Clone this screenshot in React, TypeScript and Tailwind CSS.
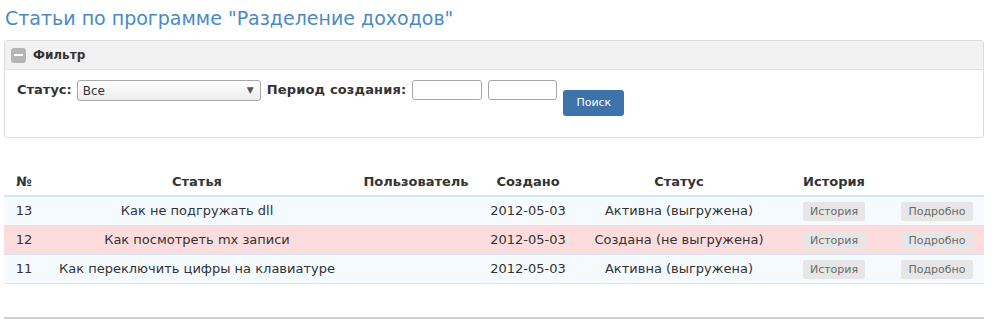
import React from 'react'

const FONT = { fontFamily: '"DejaVu Sans", Verdana, sans-serif' }

interface Article {
  id: number
  title: string
  user: string
  created: string
  status: string
  pending: boolean
}

const ROWS: Article[] = [
  { id: 13, title: 'Как не подгружать dll', user: '', created: '2012-05-03', status: 'Активна (выгружена)', pending: false },
  { id: 12, title: 'Как посмотреть mx записи', user: '', created: '2012-05-03', status: 'Создана (не выгружена)', pending: true },
  { id: 11, title: 'Как переключить цифры на клавиатуре', user: '', created: '2012-05-03', status: 'Активна (выгружена)', pending: false },
]

function SmallButton({ children }: { children: React.ReactNode }) {
  return (
    <span className="inline-block bg-[#e6e6e6] text-[#6a6a6a] text-[11px] leading-[19px] px-[7px] rounded-[2px]">
      {children}
    </span>
  )
}

export default function App() {
  return (
    <div className="w-[994px] h-[333px] bg-white text-[#333] overflow-hidden" style={FONT}>
      <div className="px-[4px]">
        <h1 className="mt-[6px] ml-[1px] text-[19px] leading-[24px] text-[#4a8ac6] font-normal">
          Статьи по программе "Разделение доходов"
        </h1>

        <div className="mt-[10px] w-[980px] border border-[#dcdcdc] rounded-[3px]">
          <div className="h-[29px] bg-[#f2f2f2] border-b border-[#e3e3e3] flex items-center pl-[6px] gap-[7px]">
            <span className="w-[15px] h-[15px] rounded-[3px] bg-[#b5b5b5] flex items-center justify-center">
              <span className="w-[9px] h-[2px] bg-white" />
            </span>
            <span className="text-[12px] font-bold text-[#333]">Фильтр</span>
          </div>
          <div className="h-[67px] flex items-start pt-[10px] pl-[12px] text-[13px]">
            <span className="font-bold leading-[20px] mr-[5px]">Статус:</span>
            <div className="w-[184px] h-[21px] border border-[#a8a8a8] rounded-[3px] bg-gradient-to-b from-white to-[#ececec] flex items-center justify-between pl-[5px] pr-[6px]">
              <span className="text-[12px]">Все</span>
              <span className="text-[9px] text-[#555]">▼</span>
            </div>
            <span className="font-bold leading-[20px] ml-[6px] mr-[6px] tracking-[0.15px]">Период создания:</span>
            <div className="w-[70px] h-[20px] border border-[#a6a6a6] rounded-[3px] bg-white" />
            <div className="w-[69px] h-[20px] border border-[#a6a6a6] rounded-[3px] bg-white ml-[6px]" />
            <button className="ml-[6px] mt-[10px] w-[61px] h-[26px] rounded-[3px] bg-[#3d72ab] text-white text-[11px]">
              Поиск
            </button>
          </div>
        </div>

        <table className="mt-[30px] w-[980px] border-collapse text-[13px] table-fixed">
          <thead>
            <tr className="h-[28px] border-b-2 border-[#d3e6f5] font-bold text-[13px] text-[#333]">
              <th className="w-[40px] text-center font-bold">№</th>
              <th className="w-[306px] text-center font-bold">Статья</th>
              <th className="w-[132px] text-center font-bold">Пользователь</th>
              <th className="w-[92px] text-center font-bold">Создано</th>
              <th className="w-[210px] text-center font-bold">Статус</th>
              <th className="w-[100px] text-center font-bold">История</th>
              <th className="text-center font-bold"></th>
            </tr>
          </thead>
          <tbody>
            {ROWS.map((r) => (
              <tr
                key={r.id}
                className={`h-[29px] border-b border-[#d6e8f6] ${r.pending ? 'bg-[#fcdcdd]' : 'bg-[#f5faff]'}`}
              >
                <td className="text-center">{r.id}</td>
                <td className="text-center">{r.title}</td>
                <td className="text-center">{r.user}</td>
                <td className="text-center">{r.created}</td>
                <td className="text-center">{r.status}</td>
                <td className="text-center">
                  <SmallButton>История</SmallButton>
                </td>
                <td className="text-center pl-[6px]">
                  <SmallButton>Подробно</SmallButton>
                </td>
              </tr>
            ))}
          </tbody>
        </table>

        <div className="mt-[33px] w-[980px] h-[2px] bg-[#cfcfcf]" />
      </div>
    </div>
  )
}
